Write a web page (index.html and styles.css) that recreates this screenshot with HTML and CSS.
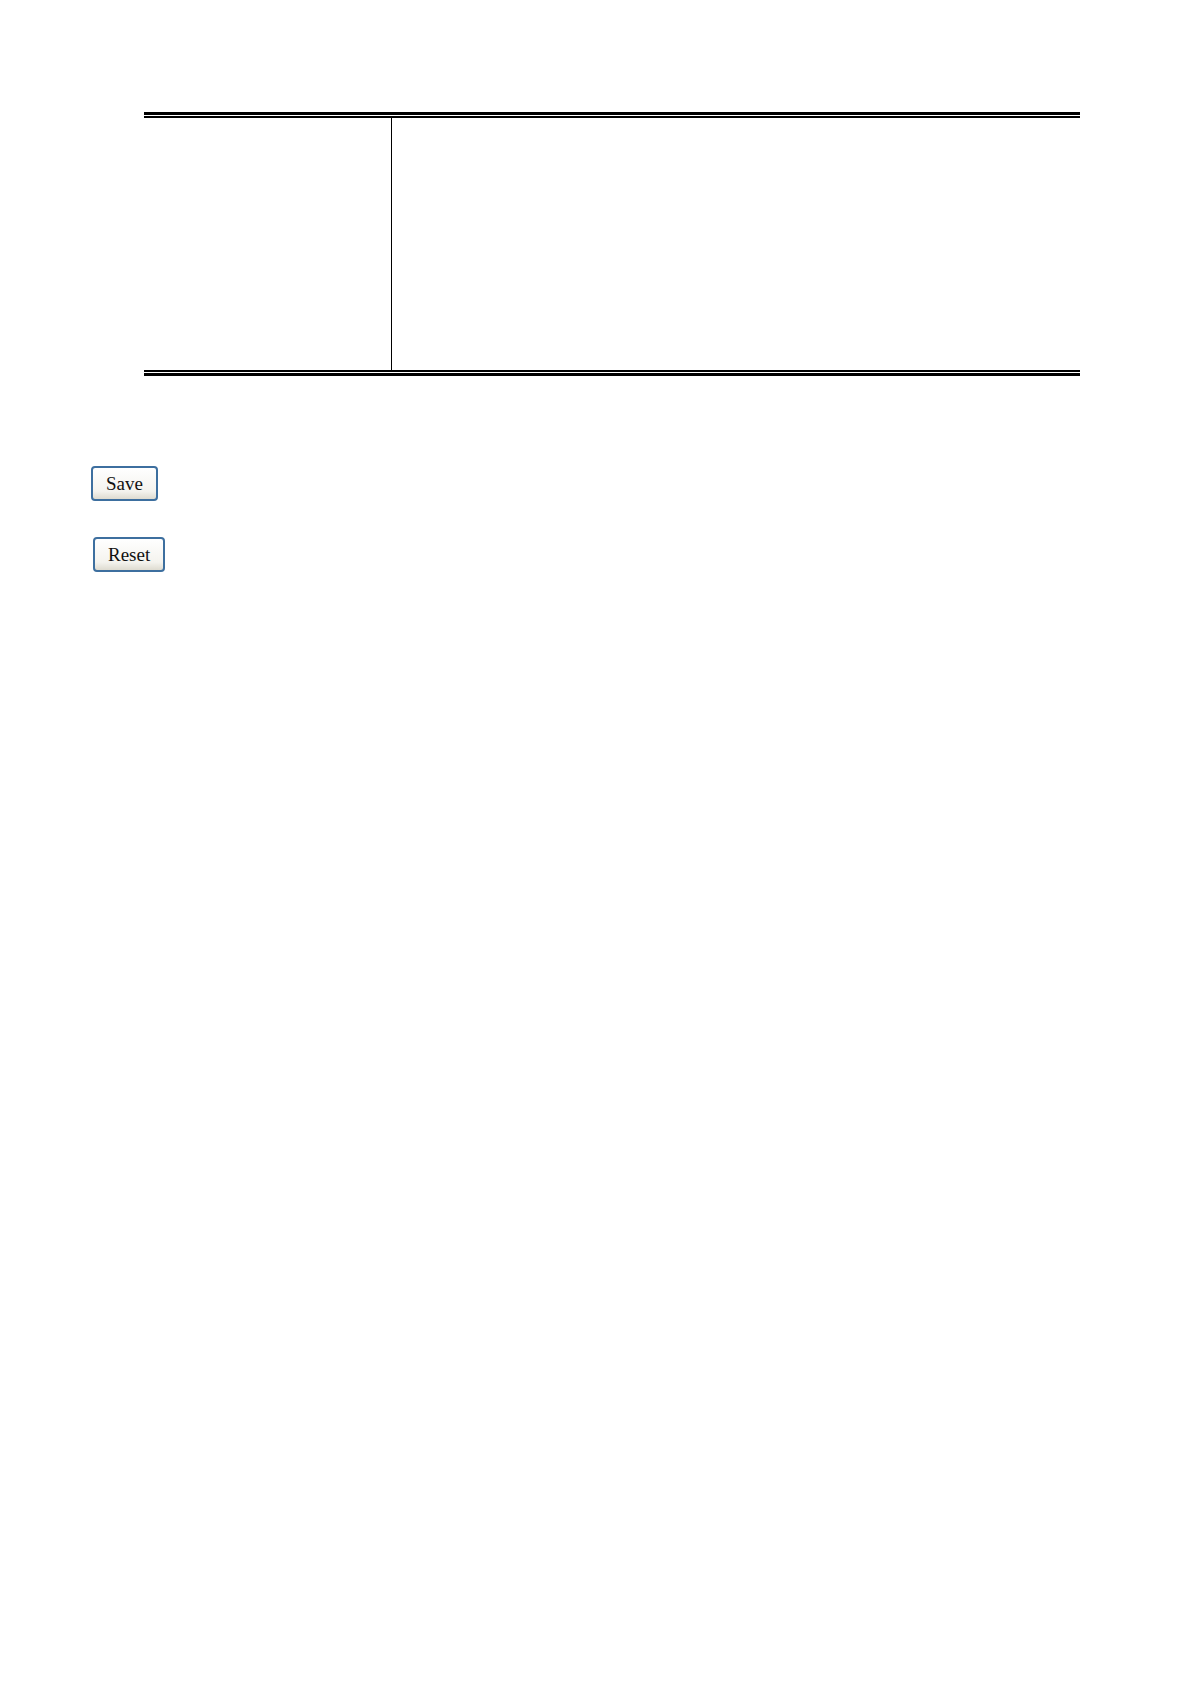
FILE: index.html
```
<!DOCTYPE html>
<html lang="en">
<head>
    <meta charset="UTF-8">
    <meta name="viewport" content="width=device-width, initial-scale=1.0">
    <title>Settings</title>
    <link rel="stylesheet" href="styles.css">
</head>
<body>
    <main>
        <table class="settings-table">
            <tbody>
                <tr>
                    <td class="label-cell"></td>
                    <td></td>
                </tr>
            </tbody>
        </table>

        <form class="actions">
            <button type="button" class="btn">Save</button>
            <button type="reset" class="btn btn-reset">Reset</button>
        </form>
    </main>
</body>
</html>
```

FILE: styles.css
```
* {
    margin: 0;
    padding: 0;
    box-sizing: border-box;
}

body {
    background-color: #ffffff;
    color: #000000;
    font-family: 'Liberation Serif', 'Times New Roman', serif;
}

main {
    padding: 112px 111px 112px 91px;
}

/* thick outer rule, thin inner rule, 1px gap between them */
.settings-table {
    width: calc(100% - 53px);
    margin-left: 53px;
    table-layout: fixed;
    border-collapse: separate;
    border-spacing: 0;
    border-top: 3px solid #000000;
    border-bottom: 3px solid #000000;
    padding: 1px 0;
}

.settings-table td {
    height: 256px;
    border-top: 2px solid #000000;
    border-bottom: 2px solid #000000;
}

.settings-table .label-cell {
    width: 248px;
    border-right: 1px solid #000000;
}

.actions {
    display: flex;
    flex-direction: column;
    align-items: flex-start;
    gap: 36px;
    margin-top: 90px;
}

.btn {
    height: 35px;
    padding: 0 13px;
    border: 2px solid #3d6f9f;
    border-radius: 4px;
    background: linear-gradient(#ffffff, #f4f3ee 75%, #dedbd0);
    color: #111111;
    font-family: inherit;
    font-size: 19px;
    line-height: 24px;
    cursor: pointer;
}

.btn:hover {
    background: #ffffff;
}

.btn-reset {
    margin-left: 2px;
}
```
